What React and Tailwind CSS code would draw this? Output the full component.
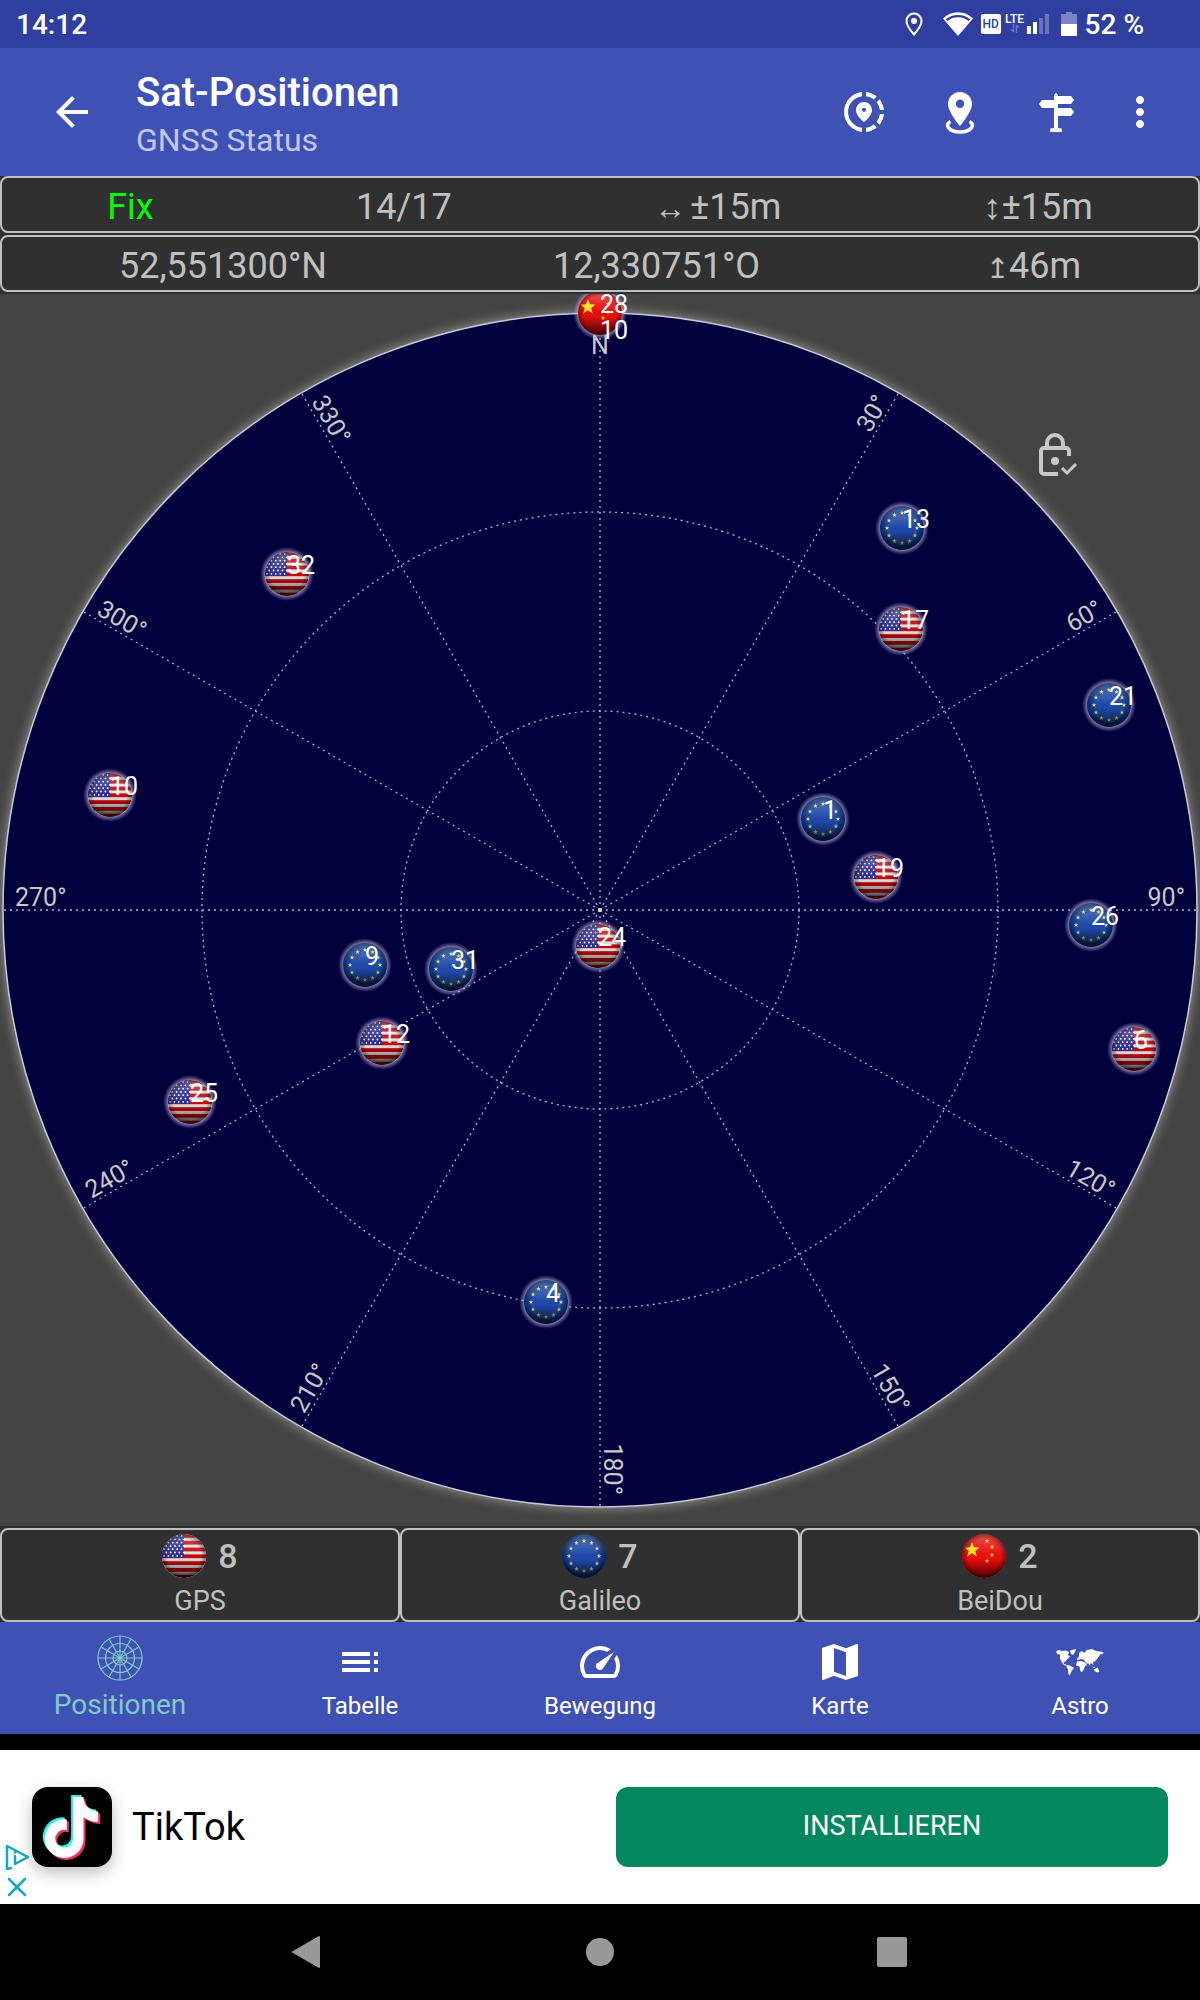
import React from "react";
import { FaTiktok } from "react-icons/fa";
import {
  MdArrowBack,
  MdMap,
  MdMoreVert,
  MdShareLocation,
  MdSpeed,
  MdToc,
} from "react-icons/md";

const CX = 600;
const CY = 616;
const R = 597;

const SATELLITES = [
  { id: 28, system: "cn", x: 600, y: 19 },
  { id: 13, system: "eu", x: 902, y: 234 },
  { id: 17, system: "us", x: 901, y: 335 },
  { id: 21, system: "eu", x: 1109, y: 411 },
  { id: 32, system: "us", x: 287, y: 280 },
  { id: 10, system: "us", x: 110, y: 501 },
  { id: 1, system: "eu", x: 823, y: 525 },
  { id: 19, system: "us", x: 876, y: 583 },
  { id: 24, system: "us", x: 598, y: 652 },
  { id: 26, system: "eu", x: 1091, y: 631 },
  { id: 9, system: "eu", x: 365, y: 671 },
  { id: 31, system: "eu", x: 451, y: 675 },
  { id: 12, system: "us", x: 382, y: 749 },
  { id: 6, system: "us", x: 1134, y: 755 },
  { id: 25, system: "us", x: 190, y: 808 },
  { id: 4, system: "eu", x: 546, y: 1008 },
];

const AZIMUTHS = [30, 60, 90, 120, 150, 180, 210, 240, 270, 300, 330];

const starPoints = (cx, cy, r) => {
  const pts = [];
  for (let i = 0; i < 10; i++) {
    const a = (Math.PI / 5) * i - Math.PI / 2;
    const len = i % 2 ? r * 0.42 : r;
    pts.push(`${(cx + len * Math.cos(a)).toFixed(2)},${(cy + len * Math.sin(a)).toFixed(2)}`);
  }
  return pts.join(" ");
};

const UsFlag = () => (
  <>
    <rect x="-22" y="-22" width="44" height="44" fill="#e4dcdc" />
    {[0, 2, 4, 6, 8, 10, 12].map((i) => (
      <rect key={i} x="-22" y={-22 + i * 3.4} width="44" height="3.8" fill="#be0a10" />
    ))}
    <rect x="-22" y="-22" width="22" height="24" fill="#2c2c8c" />
    {[0, 1, 2, 3, 4, 5, 6].map((row) =>
      [0, 1, 2, 3, 4].map((col) => (
        <circle
          key={`${row}-${col}`}
          cx={-20 + col * 4.4 + (row % 2 ? 2.2 : 0)}
          cy={-20 + row * 3.3}
          r="0.9"
          fill="#fff"
        />
      ))
    )}
  </>
);

const EuFlag = () => (
  <>
    <rect x="-22" y="-22" width="44" height="44" fill="#0c3c98" />
    <circle r="15" cy="2" fill="#1e48a8" />
    {Array.from({ length: 12 }, (_, i) => {
      const a = (Math.PI / 6) * i;
      return (
        <polygon
          key={i}
          points={starPoints(15 * Math.sin(a), -15 * Math.cos(a), 2.4)}
          fill="#f0dc50"
        />
      );
    })}
  </>
);

const CnFlag = () => (
  <>
    <rect x="-22" y="-22" width="44" height="44" fill="#e80c0c" />
    <polygon points={starPoints(-12, -6, 8)} fill="#ffde20" />
    <polygon points={starPoints(3, -15, 2.4)} fill="#ffde20" />
    <polygon points={starPoints(8, -9, 2.4)} fill="#ffde20" />
    <polygon points={starPoints(8, -1, 2.4)} fill="#ffde20" />
    <polygon points={starPoints(3, 5, 2.4)} fill="#ffde20" />
  </>
);

const FLAGS = { us: UsFlag, eu: EuFlag, cn: CnFlag };

// Glossy ball, centred on 0,0 with radius 22
const FlagBall = ({ system, uid }) => {
  const Flag = FLAGS[system];
  return (
    <>
      <defs>
        <clipPath id={`clip-${uid}`}>
          <circle r="22" />
        </clipPath>
        <linearGradient id={`shade-${uid}`} x1="0" y1="0" x2="0" y2="1">
          <stop offset="0" stopColor="#fff" stopOpacity="0.28" />
          <stop offset="0.5" stopColor="#fff" stopOpacity="0" />
          <stop offset="0.6" stopColor="#000" stopOpacity="0.05" />
          <stop offset="1" stopColor="#000" stopOpacity="0.7" />
        </linearGradient>
        <radialGradient id={`edge-${uid}`}>
          <stop offset="0.75" stopColor="#000" stopOpacity="0" />
          <stop offset="1" stopColor="#000" stopOpacity="0.4" />
        </radialGradient>
      </defs>
      <g clipPath={`url(#clip-${uid})`}>
        <Flag />
        <circle r="22" fill={`url(#shade-${uid})`} />
        <circle r="22" fill={`url(#edge-${uid})`} />
      </g>
    </>
  );
};

const SkyPlot = () => (
  <svg viewBox="0 0 1200 1232" className="block w-full h-auto font-['Roboto',sans-serif]" role="img" aria-label="Sat-Positionen">
    <defs>
      <filter id="sky-glow" x="-5%" y="-5%" width="110%" height="110%">
        <feGaussianBlur stdDeviation="6" />
      </filter>
      <radialGradient id="ball-glow">
        <stop offset="0.8" stopColor="#c8b8e0" stopOpacity="0.7" />
        <stop offset="1" stopColor="#a090d0" stopOpacity="0" />
      </radialGradient>
    </defs>

    <circle cx={CX} cy={CY} r={R + 1} fill="#d0d4c8" opacity="0.6" filter="url(#sky-glow)" />
    <circle cx={CX} cy={CY} r={R} fill="#00003c" stroke="#c8c8dc" strokeWidth="1.5" />

    {/* Elevation rings and azimuth lines */}
    <g fill="none" stroke="#b0b0e8" strokeWidth="1.3" strokeDasharray="2 4">
      <circle cx={CX} cy={CY} r="199" />
      <circle cx={CX} cy={CY} r="398" />
      {[0, 30, 60, 90, 120, 150, 180, 210, 240, 270, 300, 330].map((az) => (
        <line key={az} x1={CX} y1={CY} x2={CX} y2={CY - R} transform={`rotate(${az} ${CX} ${CY})`} />
      ))}
    </g>
    <rect x={CX - 2} y={CY - 2} width="4" height="4" fill="#d0d0d0" />

    <g fill="#c8c8c8" fontSize="25">
      <text x={CX} y="60" textAnchor="middle">N</text>
      {AZIMUTHS.map((az) => {
        const rightSide = az <= 180;
        return (
          <text
            key={az}
            x={rightSide ? CX + 585 : CX - 585}
            y={CY - 4}
            textAnchor={rightSide ? "end" : "start"}
            transform={`rotate(${rightSide ? az - 90 : az - 270} ${CX} ${CY})`}
          >
            {`${az}°`}
          </text>
        );
      })}
    </g>

    {SATELLITES.map((sat) => (
      <g key={`${sat.system}-${sat.id}`} transform={`translate(${sat.x} ${sat.y})`}>
        <circle r="27" fill="url(#ball-glow)" />
        <FlagBall system={sat.system} uid={`${sat.system}-${sat.id}`} />
      </g>
    ))}
    <g fill="#fff" fontSize="25">
      {SATELLITES.map((sat) => (
        <text key={`${sat.system}-${sat.id}`} x={sat.x} y={sat.y}>{sat.id}</text>
      ))}
      <text x="600" y="45">10</text>
    </g>
  </svg>
);

const LockCheckIcon = () => (
  <svg viewBox="0 0 48 48" className="size-12" fill="none" stroke="#c8c8c8" strokeWidth="4">
    <path d="M15 18v-5a8 8 0 0 1 16 0v5" />
    <path d="M37 26v-5a3 3 0 0 0-3-3H12a3 3 0 0 0-3 3v20a3 3 0 0 0 3 3h14" />
    <circle cx="23" cy="31" r="4" fill="#c8c8c8" stroke="none" />
    <path d="M30 38l5 5l9-9" strokeWidth="3" />
  </svg>
);

const PinRadiusIcon = () => (
  <svg viewBox="0 0 48 48" className="size-12">
    <path d="M24 4a12 12 0 0 0-12 12c0 8 12 22 12 22s12-14 12-22A12 12 0 0 0 24 4zm0 16a4.200 4.200 0 1 1 0-8.400a4.200 4.200 0 0 1 0 8.400z" fill="#fff" />
    <path d="M14.500 33.500c-3 1.500-4 4-2 6.200c4 5.600 19 5.600 23 0c2-2.200 1-4.700-2-6.200" fill="none" stroke="#fff" strokeWidth="3.500" />
  </svg>
);

const SignpostIcon = () => (
  <svg viewBox="0 0 48 48" className="size-12" fill="#fff">
    <path d="M22 7l2-2l2 2v33h2a2 2 0 0 1 2 2v2H18v-2a2 2 0 0 1 2-2h2z" />
    <path d="M26 8h13l3 4l-3 4H26zM22 12H10l-3 4l3 4h12zM26 20h13l3 4l-3 4H26z" />
  </svg>
);

const SkyIcon = () => (
  <svg viewBox="0 0 48 48" className="size-12" fill="none" stroke="currentColor" strokeWidth="1.2">
    <circle cx="24" cy="24" r="22" />
    <circle cx="24" cy="24" r="14.500" />
    <circle cx="24" cy="24" r="7" />
    {[0, 30, 60, 90, 120, 150].map((a) => (
      <line key={a} x1="24" y1="2" x2="24" y2="46" transform={`rotate(${a} 24 24)`} />
    ))}
  </svg>
);

const WorldIcon = () => (
  <svg viewBox="0 0 48 48" className="size-12" fill="#fff">
    <g transform="translate(0 11)">
      <path d="M0 3L2 1L6 2L10 1.500L13 3L12 6L14 7.500L12 9.500L10 11.500L9 13L7.500 12.500L8 15L10 15.500L11 17L8 16L5.500 13L4 9.500L4 5.500L1.500 5.500z" />
      <path d="M14 1.500L20 0L19 3L17 6L15 5z" />
      <path d="M11 16L14 16.500L18 19L16 21.500L14.500 24L14 26.500L12.500 25L12 20.500L10.500 18z" />
      <path d="M21 12.500L25 12L29 13.500L31 16L29 17L28 20L26 23L24.500 22.500L23.500 17.500L20 16.500z" />
      <path d="M21 11.500L21.500 9L23 7.500L23 4L26 2L28 4L31 1L36 0L40 2L47 3L47.500 4.500L44 5.500L43 7.500L41 10L39.500 12L37 13L37.500 16L35 14L33.500 16.500L32 13.500L31 15L29 12.500L27.500 10.500L24.500 10z" />
      <path d="M36 17.500L39 18L38 19z M38 20.500L41.500 18.500L43.500 22.500L41.500 23.500L38.500 22z" />
    </g>
  </svg>
);

const StatusBar = () => (
  <div className="flex h-12 items-center justify-between bg-[#303f9f] pl-4 pr-14 text-[28px] font-medium text-white">
    <span className="pt-0.5 leading-8">14:12</span>
    <div className="flex items-center">
      <svg viewBox="0 0 18 24" className="mr-5 h-6 w-[18px]" fill="none" stroke="#fff" strokeWidth="2">
        <path d="M9 1.500a7.500 7.500 0 0 0-7.500 7.500c0 5 7.500 13.500 7.500 13.500s7.500-8.500 7.500-13.500A7.500 7.500 0 0 0 9 1.500z" />
        <circle cx="9" cy="9" r="3" fill="#fff" stroke="none" />
      </svg>
      <svg viewBox="0 0 30 24" className="mr-2 h-6 w-[30px]">
        <path d="M15 24L0 6.500C8.500-2 21.500-2 30 6.500z" fill="#fff" />
        <path d="M3.500 8.200C10 2.800 20 2.800 26.500 8.200" fill="none" stroke="#303f9f" strokeWidth="2.200" />
      </svg>
      <span className="mr-1 flex h-5 w-5 items-center justify-center rounded-xs bg-white text-[12px] leading-5 text-[#303f9f]">HD</span>
      <span className="mr-0.5 flex h-5 w-5 flex-col items-center text-[12px] leading-[10px]">
        LTE
        <svg viewBox="0 0 10 9" className="h-[9px] w-[10px]" fill="none" stroke="#6a72bd" strokeWidth="1.500">
          <path d="M3.500 0v8M1 5.500l2.500 2.500M6.500 9V1M9 3.500L6.500 1" />
        </svg>
      </span>
      <svg viewBox="0 0 22 20" className="mr-3 h-5 w-[22px]">
        <path d="M0 12h4v8H0zM6 8h4v12H6z" fill="#fff" />
        <path d="M12 4h4v16h-4zM18 0h4v20h-4z" fill="#6a72bd" />
      </svg>
      <svg viewBox="0 0 16 24" className="mr-2 h-6 w-4">
        <path d="M5 0h6v2h5v11H0V2h5z" fill="#7d82c4" />
        <path d="M0 12h16v12H0z" fill="#fff" />
      </svg>
      <span className="pt-0.5 leading-8">52 %</span>
    </div>
  </div>
);

const AppBar = () => (
  <header className="flex h-32 items-center bg-[#3f51b5] pr-6 text-white">
    <button type="button" aria-label="Zurück" className="ml-12 mr-10">
      <MdArrowBack className="size-12" />
    </button>
    <div className="flex-1 pt-2">
      <h1 className="text-[40px] font-medium leading-[48px]">Sat-Positionen</h1>
      <p className="text-[32px] leading-[46px] text-[#c0c8ee]">GNSS Status</p>
    </div>
    <button type="button" aria-label="Standort teilen" className="flex w-24 justify-center">
      <MdShareLocation className="size-12" />
    </button>
    <button type="button" aria-label="Mein Standort" className="flex w-24 justify-center">
      <PinRadiusIcon />
    </button>
    <button type="button" aria-label="Wegweiser" className="flex w-24 justify-center">
      <SignpostIcon />
    </button>
    <button type="button" aria-label="Mehr" className="flex w-[72px] justify-center">
      <MdMoreVert className="size-12" />
    </button>
  </header>
);

const InfoRow = ({ children }) => (
  <div className="flex h-[57px] items-center rounded-lg border-2 border-[#c0c0c0] px-1 pt-1 text-center text-[36px] leading-[48px] text-[#c0c0c0]">
    {children}
  </div>
);

const COUNTS = [
  { system: "us", count: 8, name: "GPS" },
  { system: "eu", count: 7, name: "Galileo" },
  { system: "cn", count: 2, name: "BeiDou" },
];

const TABS = [
  { label: "Tabelle", icon: <MdToc className="size-12" /> },
  { label: "Bewegung", icon: <MdSpeed className="size-12" /> },
  { label: "Karte", icon: <MdMap className="size-12" /> },
  { label: "Astro", icon: <WorldIcon /> },
];

const AdBanner = () => (
  <section className="relative flex items-center bg-white px-8 py-[37px]">
    <svg viewBox="0 0 80 80" className="size-20 rounded-2xl bg-black shadow-[0_6px_16px_rgba(0,0,0,0.25)]">
      <FaTiktok x="7" y="8" size="61" color="#25f4ee" />
      <FaTiktok x="11" y="12" size="61" color="#fe2c55" />
      <FaTiktok x="9" y="10" size="61" color="#ffffff" />
    </svg>
    <span className="ml-5 flex-1 text-[38px] leading-[44px] text-black">TikTok</span>
    <button type="button" className="h-20 w-[552px] rounded-xl bg-[#02875f] pb-0.5 text-[27px] leading-8 text-white">
      INSTALLIEREN
    </button>
    <div className="absolute bottom-0 left-0 flex w-[34px] flex-col items-center gap-1 pb-1">
      <button type="button" aria-label="Datenschutzinfo">
        <svg viewBox="0 0 26 26" className="size-[26px]" fill="none" stroke="#12a9c4" strokeWidth="2.500" strokeLinejoin="round" strokeLinecap="round">
          <path d="M7 24l-4 1V2l21 11l-13 7V12" />
          <path d="M11 8v0.500" />
        </svg>
      </button>
      <button type="button" aria-label="Werbung schließen">
        <svg viewBox="0 0 26 26" className="size-[26px]" stroke="#12a9c4" strokeWidth="2.500" strokeLinecap="round">
          <path d="M5 5l16 16M21 5L5 21" />
        </svg>
      </button>
    </div>
  </section>
);

export default function App() {
  return (
    <div className="w-full bg-black font-['Roboto',sans-serif]">
      <StatusBar />
      <AppBar />

      <main>
        <div className="flex flex-col gap-0.5 bg-[#303030] pb-0.5">
          <InfoRow>
            <span className="grow text-[#00ff00]">Fix</span>
            <span className="grow">14/17</span>
            <span className="grow">
              <span className="mr-1 font-['Liberation_Sans',sans-serif] text-[32px] leading-8">↔</span>±15m
            </span>
            <span className="grow">
              <span className="font-['Liberation_Sans',sans-serif] text-[36px] leading-8">↕</span>±15m
            </span>
          </InfoRow>
          <InfoRow>
            <span className="grow">52,551300°N</span>
            <span className="grow">12,330751°O</span>
            <span className="grow">
              <span className="font-['Liberation_Sans',sans-serif] text-[28px] leading-8">↥</span>46m
            </span>
          </InfoRow>
        </div>

        <div className="relative bg-[#444444]">
          <SkyPlot />
          <button type="button" aria-label="Ausrichtung sperren" className="absolute left-[86%] top-[11%]">
            <LockCheckIcon />
          </button>
        </div>

        <div className="grid grid-cols-3 bg-[#303030] pt-0.5">
          {COUNTS.map((item) => (
            <div key={item.name} className="flex flex-col items-center rounded-lg border-2 border-[#c0c0c0] pt-1 text-[#c0c0c0]">
              <div className="flex items-center gap-3">
                <svg viewBox="-22 -22 44 44" className="size-11">
                  <FlagBall system={item.system} uid={`count-${item.system}`} />
                </svg>
                <span className="text-[34px] font-medium leading-[44px]">{item.count}</span>
              </div>
              <span className="pt-1 text-[27px] leading-[38px]">{item.name}</span>
            </div>
          ))}
        </div>
      </main>

      <nav className="grid h-28 grid-cols-5 bg-[#3f51b5] text-white">
        <a href="#positionen" className="flex flex-col items-center gap-1.5 pt-3 text-[28px] leading-[34px] text-[#80cbc4]">
          <SkyIcon />
          Positionen
        </a>
        {TABS.map((tab) => (
          <a key={tab.label} href={`#${tab.label.toLowerCase()}`} className="flex flex-col items-center gap-1.5 pt-4 text-[24px] leading-7">
            {tab.icon}
            {tab.label}
          </a>
        ))}
      </nav>

      <div className="pt-4">
        <AdBanner />
      </div>

      <div className="mx-auto grid h-24 w-[73%] grid-cols-3 place-items-center">
        <button type="button" aria-label="Zurück">
          <svg viewBox="0 0 32 32" className="size-8" fill="#999" stroke="#999" strokeWidth="2" strokeLinejoin="round">
            <path d="M1 16L27 1v30z" />
          </svg>
        </button>
        <button type="button" aria-label="Startbildschirm" className="size-7 rounded-full bg-[#999999]" />
        <button type="button" aria-label="Übersicht" className="size-[30px] rounded-xs bg-[#999999]" />
      </div>
    </div>
  );
}
